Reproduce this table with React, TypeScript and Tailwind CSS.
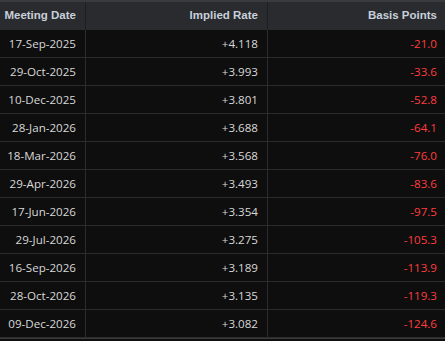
const rows: [string, string, string][] = [
  ["17-Sep-2025", "+4.118", "-21.0"],
  ["29-Oct-2025", "+3.993", "-33.6"],
  ["10-Dec-2025", "+3.801", "-52.8"],
  ["28-Jan-2026", "+3.688", "-64.1"],
  ["18-Mar-2026", "+3.568", "-76.0"],
  ["29-Apr-2026", "+3.493", "-83.6"],
  ["17-Jun-2026", "+3.354", "-97.5"],
  ["29-Jul-2026", "+3.275", "-105.3"],
  ["16-Sep-2026", "+3.189", "-113.9"],
  ["28-Oct-2026", "+3.135", "-119.3"],
  ["09-Dec-2026", "+3.082", "-124.6"],
];

export default function App() {
  return (
    <div className="h-[341px] w-[445px] overflow-hidden bg-[#0e0e0e]">
      <div className="border-t-2 border-[#3a3a3d]">
        <div className="grid h-[28px] grid-cols-[86px_182px_1fr] whitespace-nowrap bg-[#2a2b2f] font-['Liberation_Sans',Arial,sans-serif] text-[11.5px] font-bold text-[#c8d0da]">
          <div className="flex items-center justify-end border-r border-[#1e1e20] pr-[9px]">Meeting Date</div>
          <div className="flex items-center justify-end border-r border-[#1e1e20] pr-[9px]">Implied Rate</div>
          <div className="flex items-center justify-end pr-[8px]">Basis Points</div>
        </div>
        {rows.map(([date, rate, bp]) => (
          <div
            key={date}
            className="grid h-[28px] grid-cols-[86px_182px_1fr] whitespace-nowrap border-b border-[#2c2c2e] font-['Open_Sans','Noto_Sans',sans-serif] text-[11.6px]"
          >
            <div className="flex items-center justify-end border-r border-[#2c2c2e] pr-[9px] text-[#d8d8d8]">{date}</div>
            <div className="flex items-center justify-end border-r border-[#2c2c2e] pr-[9px] text-[#d8d8d8]">{rate}</div>
            <div className="flex items-center justify-end pr-[8px] text-[#ff3d3d]">{bp}</div>
          </div>
        ))}
        <div className="h-[1px] bg-[#3a3a3d]" />
      </div>
    </div>
  );
}
